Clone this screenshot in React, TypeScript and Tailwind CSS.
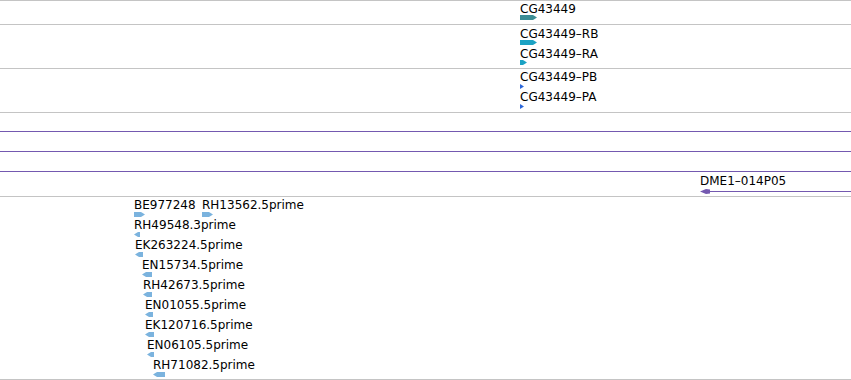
type Feature = {
  label?: string;
  x: number;
  cap?: number;
  gy: number;
  w: number;
  dir: 1 | -1;
  color: string;
};

type Track = { top: number; height: number; features: Feature[]; lines?: number[] };

const teal = "#3b8d95";
const cyan = "#1ba2c4";
const blue = "#2c68da";
const purple = "#7459b0";
const est = "#7bb3de";

const tracks: Track[] = [
  {
    top: 1,
    height: 23,
    features: [{ label: "CG43449", x: 520, cap: 4, gy: 15, w: 17, dir: 1, color: teal }],
  },
  {
    top: 25,
    height: 43,
    features: [
      { label: "CG43449–RB", x: 520, cap: 29, gy: 40, w: 17, dir: 1, color: cyan },
      { label: "CG43449–RA", x: 520, cap: 49, gy: 60, w: 7, dir: 1, color: cyan },
    ],
  },
  {
    top: 69,
    height: 43,
    features: [
      { label: "CG43449–PB", x: 520, cap: 72, gy: 84, w: 4, dir: 1, color: blue },
      { label: "CG43449–PA", x: 520, cap: 92, gy: 104, w: 4, dir: 1, color: blue },
    ],
  },
  {
    top: 113,
    height: 83,
    lines: [131, 151, 171],
    features: [{ label: "DME1–014P05", x: 700, cap: 176, gy: 189, w: 151, dir: -1, color: purple }],
  },
  {
    top: 197,
    height: 182,
    features: [
      { label: "BE977248", x: 134, cap: 200, gy: 212, w: 11, dir: 1, color: est },
      { label: "RH13562.5prime", x: 202, cap: 200, gy: 212, w: 11, dir: 1, color: est },
      { label: "RH49548.3prime", x: 134, cap: 220, gy: 232, w: 6, dir: -1, color: est },
      { label: "EK263224.5prime", x: 135, cap: 240, gy: 252, w: 8, dir: -1, color: est },
      { label: "EN15734.5prime", x: 142, cap: 260, gy: 272, w: 10, dir: -1, color: est },
      { label: "RH42673.5prime", x: 143, cap: 280, gy: 292, w: 9, dir: -1, color: est },
      { label: "EN01055.5prime", x: 145, cap: 300, gy: 312, w: 8, dir: -1, color: est },
      { label: "EK120716.5prime", x: 145, cap: 320, gy: 332, w: 9, dir: -1, color: est },
      { label: "EN06105.5prime", x: 147, cap: 340, gy: 352, w: 7, dir: -1, color: est },
      { label: "RH71082.5prime", x: 153, cap: 360, gy: 372, w: 12, dir: -1, color: est },
    ],
  },
];

function Glyph({ w, dir, color, thin }: { w: number; dir: 1 | -1; color: string; thin?: boolean }) {
  const h = 5;
  const tip = Math.min(4, w);
  let pts: string;
  if (thin) {
    // long feature running off the right edge, small arrowhead on the left
    return (
      <svg width={w} height={h} className="block">
        <rect x={6} y={2} width={w - 6} height={1} fill={color} />
        <polygon points="0,2.5 6,0 10,0.5 10,4.5 6,5" fill={color} />
      </svg>
    );
  }
  if (dir === 1) {
    pts = `0,0 ${w - tip},0 ${w},2.5 ${w - tip},5 0,5`;
    if (w <= 5) pts = `0,0 ${w},2.5 0,5`;
  } else {
    pts = `0,2.5 ${tip},0 ${w},0 ${w},5 ${tip},5`;
  }
  return (
    <svg width={w} height={h} className="block">
      <polygon points={pts} fill={color} />
    </svg>
  );
}

function TrackRow({ track }: { track: Track }) {
  return (
    <div className="relative border-t border-[#c4c4c4] overflow-hidden" style={{ height: track.height + 1 }}>
      {track.lines?.map((y) => (
        <div key={y} className="absolute left-0 right-0 h-px bg-[#7459b0]" style={{ top: y - track.top }} />
      ))}
      {track.features.map((f, i) => (
        <div key={i}>
          {f.label && f.cap !== undefined && (
            <div
              className="absolute whitespace-nowrap text-[12px] leading-[14px] text-black"
              style={{ left: f.x, top: f.cap - 2 - track.top }}
            >
              {f.label}
            </div>
          )}
          <div className="absolute" style={{ left: f.x, top: f.gy - track.top }}>
            <Glyph w={f.w} dir={f.dir} color={f.color} thin={f.w > 100} />
          </div>
        </div>
      ))}
    </div>
  );
}

export default function App() {
  return (
    <div className="w-[851px] h-[380px] bg-white overflow-hidden font-['DejaVu_Sans',sans-serif]">
      <div className="flex flex-col border-b border-[#c4c4c4]">
        {tracks.map((t) => (
          <TrackRow key={t.top} track={t} />
        ))}
      </div>
    </div>
  );
}
